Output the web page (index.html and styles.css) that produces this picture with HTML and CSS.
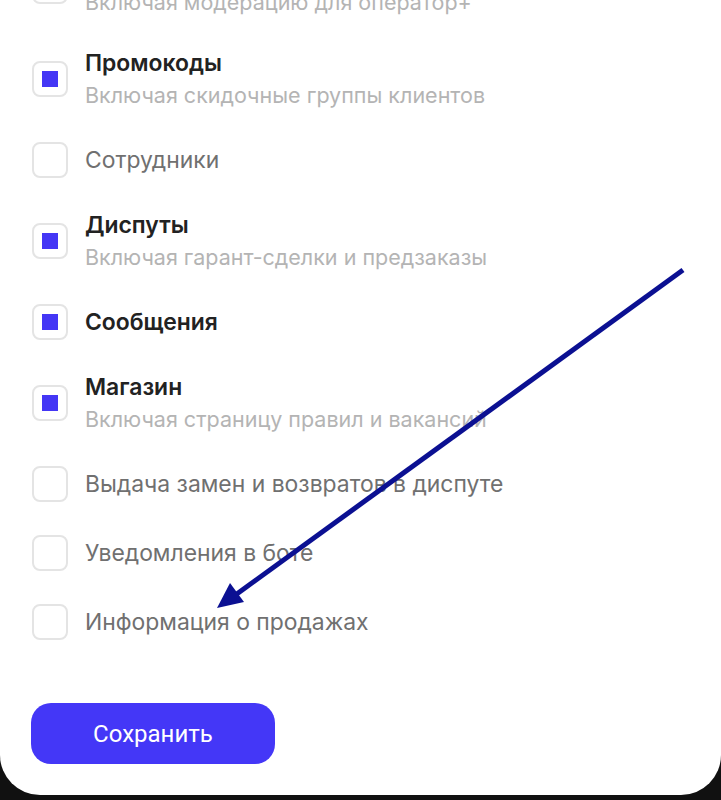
FILE: index.html
```html
<!DOCTYPE html>
<html lang="ru">
<head>
<meta charset="UTF-8">
<meta name="viewport" content="width=device-width, initial-scale=1.0">
<title>Права доступа</title>
<link rel="stylesheet" href="styles.css">
</head>
<body>

<div class="card">
  <div class="options">
    <div class="option">
      <span class="box"></span>
      <div class="text">
        <div class="title">Модерация</div>
        <div class="sub">Включая модерацию для оператор+</div>
      </div>
    </div>
    <div class="option">
      <span class="box checked"></span>
      <div class="text">
        <div class="title">Промокоды</div>
        <div class="sub">Включая скидочные группы клиентов</div>
      </div>
    </div>
    <div class="option single">
      <span class="box"></span>
      <div class="text"><div class="label">Сотрудники</div></div>
    </div>
    <div class="option">
      <span class="box checked"></span>
      <div class="text">
        <div class="title">Диспуты</div>
        <div class="sub">Включая гарант-сделки и предзаказы</div>
      </div>
    </div>
    <div class="option single">
      <span class="box checked"></span>
      <div class="text"><div class="title">Сообщения</div></div>
    </div>
    <div class="option">
      <span class="box checked"></span>
      <div class="text">
        <div class="title">Магазин</div>
        <div class="sub">Включая страницу правил и вакансий</div>
      </div>
    </div>
    <div class="option single">
      <span class="box"></span>
      <div class="text"><div class="label">Выдача замен и возвратов в диспуте</div></div>
    </div>
    <div class="option single">
      <span class="box"></span>
      <div class="text"><div class="label">Уведомления в боте</div></div>
    </div>
    <div class="option single">
      <span class="box"></span>
      <div class="text"><div class="label">Информация о продажах</div></div>
    </div>
  </div>

  <button class="save">Сохранить</button>
</div>

<!-- annotation arrow drawn over the screenshot -->
<svg class="arrow" width="721" height="800" viewBox="0 0 721 800">
  <line x1="683" y1="270" x2="234" y2="596" stroke="#0b1092" stroke-width="5"/>
  <polygon points="217,608 230,583 244,602" fill="#0b1092"/>
</svg>

</body>
</html>
```

FILE: styles.css
```css
body, html {
  margin: 0;
  height: 100%;
  background-color: #111;
  overflow: hidden;
}
body {
  position: relative;
  font-family: Inter, "Noto Sans", sans-serif;
}
.card {
  background-color: #fff;
  height: 795px;
  border-radius: 0 0 40px 40px;
  overflow: hidden;
  padding-left: 32px;
  box-sizing: border-box;
}
.options {
  display: flex;
  flex-direction: column;
  gap: 33px;
  margin-top: -44px;
}
.option {
  display: flex;
  align-items: center;
  gap: 17px;
}
.box {
  flex: none;
  width: 36px;
  height: 36px;
  box-sizing: border-box;
  border: 2px solid #e4e4e4;
  border-radius: 8px;
  display: flex;
  justify-content: center;
  align-items: center;
}
.box.checked::after {
  content: "";
  width: 16px;
  height: 16px;
  background-color: #4436f5;
}
.text {
  font-size: 22.9px;
  line-height: 28px;
}
.title {
  font-weight: 600;
  color: #222;
}
.sub {
  font-size: 21.5px;
  color: #b4b4b4;
  margin-top: 4px;
}
.label {
  color: #707070;
}
.save {
  margin-top: 63px;
  width: 244px;
  height: 61px;
  margin-left: -1px;
  border: none;
  border-radius: 20px;
  background-color: #4437f7;
  color: #fff;
  font-family: Roboto, "Noto Sans", sans-serif;
  font-size: 24px;
  cursor: pointer;
}
.arrow {
  position: absolute;
  left: 0;
  top: 0;
  pointer-events: none;
}
```
